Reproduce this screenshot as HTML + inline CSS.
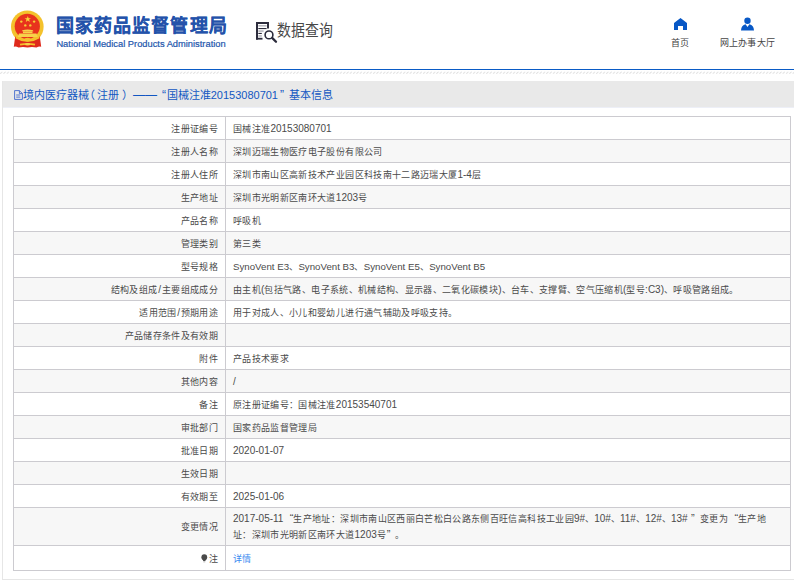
<!DOCTYPE html>
<html lang="zh-CN">
<head>
<meta charset="utf-8">
<style>
*{margin:0;padding:0;box-sizing:border-box}
html,body{width:794px;height:581px;overflow:hidden;background:#fff;font-family:"Liberation Sans",sans-serif;color:#555}
.abs{position:absolute}
#emblem{left:0;top:0;width:56px;height:56px}
#title{left:55.9px;top:13.3px;font-size:18px;font-weight:700;color:#2352aa;-webkit-text-stroke:0.12px #2352aa;white-space:nowrap;line-height:26px;letter-spacing:1.1px}
#sub{left:56.4px;top:39px;font-size:9.32px;color:#2356ac;-webkit-text-stroke:0.2px #2356ac;white-space:nowrap;line-height:11px}
#qicon{left:255px;top:21px;width:23px;height:23px;overflow:visible}
#qtext{left:277px;font-size:14px;color:#484848;white-space:nowrap;line-height:20px;transform:scale(0.99,1.1);transform-origin:0 0;top:18.6px}
#home{left:673px;top:17px;width:15px;height:14px}
#hometext{left:670.5px;top:35.6px;font-size:9px;letter-spacing:0.3px;color:#444;white-space:nowrap;line-height:14px}
#user{left:740px;top:16px;width:15px;height:15px}
#usertext{left:719.5px;top:35.6px;font-size:9px;letter-spacing:0.3px;color:#444;white-space:nowrap;line-height:14px}
#blueline{left:0;top:69px;width:794px;height:1px;background:#0a5bc6}
#hatch{left:0;top:70.5px;width:794px;height:3px}
#panel{left:2px;top:81px;width:800px;height:499px;border-left:1px solid #e6e6e6;border-bottom:1px solid #e6e6e6}
#phead{left:0;top:0;width:800px;height:27px;background:#e9e9e9;border-bottom:1px solid #edeff7}
.pt{top:7.3px;font-size:11px;color:#1257c2;white-space:nowrap;line-height:14px}
table{position:absolute;left:13px;top:116px;width:778px;border-collapse:collapse;font-size:9px;letter-spacing:0.35px;color:#4a4a4a}
.n{font-size:10px;letter-spacing:0}
.qo{display:inline-block;width:10px;text-align:right;letter-spacing:0;font-size:11px}
.qc{display:inline-block;width:12.5px;padding-left:3.5px;text-align:left;letter-spacing:0;font-size:11px}
.h{letter-spacing:-0.07px}
.s{font-size:9.7px}
td{border:1px solid #cccbd0;height:23px;padding:1.5px 0 0 0;vertical-align:middle;line-height:14px}
td.l{width:212px;text-align:right;padding-right:7px}
td.v{padding-left:7px}
tr:nth-child(even) td{background:#f7f7f7}
a{color:#3d8bf0;text-decoration:none}
</style>
</head>
<body>
<svg id="emblem" class="abs" viewBox="0 0 56 56">
  <circle cx="27.3" cy="26.8" r="16.3" fill="#f4c22c"/>
  <circle cx="27.3" cy="26.3" r="12.6" fill="#e8331d"/>
  <path d="M27.8 15.9 L28.6 18.2 L31 18.2 L29.1 19.6 L29.8 21.9 L27.8 20.5 L25.8 21.9 L26.5 19.6 L24.6 18.2 L27 18.2Z" fill="#f8d53a"/>
  <circle cx="21.3" cy="21.6" r="1.2" fill="#f6cd36"/><circle cx="34.1" cy="21.6" r="1.2" fill="#f6cd36"/>
  <circle cx="25.3" cy="25.4" r="1.2" fill="#f6cd36"/><circle cx="30.3" cy="25.4" r="1.2" fill="#f6cd36"/>
  <path d="M22.5 30.2 Q27.5 29 32.8 30.2 L33.5 31.3 H21.8Z" fill="#f7d24a"/>
  <rect x="23" y="31.3" width="9.5" height="1.8" fill="#f7d24a"/>
  <path d="M19 33.6 H36.5 L37.8 37 H17.6Z" fill="#f7d24a"/>
  <path d="M15.2 36.5 Q21 40.5 27.5 40.5 Q34 40.5 39.8 36.5 L41.2 46.8 Q39 46 36.5 47.6 Q32 46.3 27.5 47.6 Q23 46.3 18.5 47.6 Q16 46 13.8 46.8Z" fill="#df2a1c"/>
  <path d="M16 36.6 Q21.5 40.2 27.5 40 Q33.5 40.2 39 36.6 L39.5 38.2 Q33.5 42 27.5 41.8 Q21.5 42 15.5 38.2Z" fill="#f4c22c"/>
  <ellipse cx="27.6" cy="39.6" rx="3.3" ry="1.9" fill="#f4c22c"/>
  <path d="M19.8 43.8 Q27.5 42.3 35.2 43.8 L34.8 45.4 Q27.5 44 20.2 45.4Z" fill="#f4c22c"/>
  <ellipse cx="27.6" cy="44.3" rx="2.6" ry="1.3" fill="#f7d24a"/>
</svg>
<div id="title" class="abs">国家药品监督管理局</div>
<div id="sub" class="abs">National Medical Products Administration</div>

<svg id="qicon" class="abs" viewBox="0 0 23 23">
  <rect x="1" y="1" width="13" height="2" fill="#2c2c3c"/>
  <rect x="1" y="1" width="2" height="17.6" fill="#2c2c3c"/>
  <rect x="12" y="1" width="2" height="6.5" fill="#2c2c3c"/>
  <rect x="1" y="16.8" width="6.5" height="1.8" fill="#2c2c3c"/>
  <rect x="3.3" y="4.3" width="8.3" height="1.1" fill="#9a9aa4"/>
  <rect x="3.3" y="7" width="8.3" height="1.1" fill="#2c2c3c"/>
  <rect x="3.3" y="9.5" width="5.3" height="1.1" fill="#9a9aa4"/>
  <rect x="3.3" y="11.9" width="3.5" height="1.1" fill="#2c2c3c"/>
  <rect x="3.3" y="14.4" width="3.5" height="1.1" fill="#9a9aa4"/>
  <circle cx="14" cy="13.9" r="3.9" fill="none" stroke="#2c2c3c" stroke-width="1.6"/>
  <path d="M17.4 17.1 L21 20.8" stroke="#2c2c3c" stroke-width="2.3" stroke-linecap="round"/>
</svg>
<div id="qtext" class="abs">数据查询</div>

<svg id="home" class="abs" viewBox="0 0 15 14">
  <path d="M7.5 1 L14 6 V13 H10 V9 H5 V13 H1 V6Z" fill="#0858c6"/>
</svg>
<div id="hometext" class="abs">首页</div>
<svg id="user" class="abs" viewBox="0 0 15 15">
  <circle cx="7.5" cy="4.8" r="3.2" fill="#0858c6"/>
  <path d="M1 14.5 Q1.3 9.3 5.6 8.3 L7.5 11 L9.4 8.3 Q13.7 9.3 14 14.5Z" fill="#0858c6"/>
</svg>
<div id="usertext" class="abs">网上办事大厅</div>

<div id="blueline" class="abs"></div>
<svg id="hatch" class="abs" width="794" height="3"><defs><pattern id="hp" width="3.33" height="3" patternUnits="userSpaceOnUse"><path d="M0.3 2.7 L2.3 0.7" stroke="#dcdcdc" stroke-width="0.9"/></pattern></defs><rect width="794" height="3" fill="url(#hp)"/></svg>

<div id="panel" class="abs">
  <div id="phead" class="abs"></div>
  <svg class="abs" style="left:11px;top:8.8px;width:9px;height:10px" viewBox="0 0 9 10"><path d="M0.6 0.6 H5.4 L8.4 3.6 V9.4 H0.6Z M5.4 0.6 V3.6 H8.4" fill="none" stroke="#3f66cc" stroke-width="0.9"/><path d="M2.2 5 H6.3 M2.2 7.1 H6.3" stroke="#3f66cc" stroke-width="0.9"/></svg>
  <div class="abs pt" style="left:19.5px">境内医疗器械</div>
  <div class="abs pt" style="left:80.6px">（</div>
  <div class="abs pt" style="left:93.9px">注册</div>
  <div class="abs pt" style="left:119.3px">）</div>
  <div class="abs pt" style="left:130px;font-size:12px">——</div>
  <div class="abs pt" style="left:159px;font-size:12px">“</div>
  <div class="abs pt" style="left:163.7px">国械注准20153080701</div>
  <div class="abs pt" style="left:277px;font-size:12px">”</div>
  <div class="abs pt" style="left:286px">基本信息</div>
</div>

<table>
<tr><td class="l">注册证编号</td><td class="v">国械注准<span class="n">20153080701</span></td></tr>
<tr><td class="l">注册人名称</td><td class="v">深圳迈瑞生物医疗电子股份有限公司</td></tr>
<tr><td class="l">注册人住所</td><td class="v">深圳市南山区高新技术产业园区科技南十二路迈瑞大厦<span class="n">1-4</span>层</td></tr>
<tr><td class="l">生产地址</td><td class="v">深圳市光明新区南环大道<span class="n">1203</span>号</td></tr>
<tr><td class="l">产品名称</td><td class="v">呼吸机</td></tr>
<tr><td class="l">管理类别</td><td class="v">第三类</td></tr>
<tr><td class="l">型号规格</td><td class="v"><span class="n s">SynoVent E3</span>、<span class="n s">SynoVent B3</span>、<span class="n s">SynoVent E5</span>、<span class="n s">SynoVent B5</span></td></tr>
<tr><td class="l">结构及组成<span class="n" style="padding:0 0.8px">/</span>主要组成成分</td><td class="v">由主机<span class="n">(</span>包括气路、电子系统、机械结构、显示器、二氧化碳模块<span class="n">)</span>、台车、支撑臂、空气压缩机<span class="n">(</span>型号<span class="n">:C3)</span>、呼吸管路组成。</td></tr>
<tr><td class="l">适用范围<span class="n" style="padding:0 0.6px">/</span>预期用途</td><td class="v">用于对成人、小儿和婴幼儿进行通气辅助及呼吸支持。</td></tr>
<tr><td class="l">产品储存条件及有效期</td><td class="v"></td></tr>
<tr><td class="l">附件</td><td class="v">产品技术要求</td></tr>
<tr><td class="l">其他内容</td><td class="v"><span class="n">/</span></td></tr>
<tr><td class="l">备注</td><td class="v">原注册证编号：国械注准<span class="n">20153540701</span></td></tr>
<tr><td class="l">审批部门</td><td class="v">国家药品监督管理局</td></tr>
<tr><td class="l">批准日期</td><td class="v"><span class="n">2020-01-07</span></td></tr>
<tr><td class="l">生效日期</td><td class="v"></td></tr>
<tr><td class="l">有效期至</td><td class="v"><span class="n">2025-01-06</span></td></tr>
<tr><td class="l" style="height:38px">变更情况</td><td class="v" style="line-height:15.3px;padding-top:1px"><span class="n">2017-05-11</span><span class="qo">“</span>生产地址：深圳市南山区西丽白芒松白公路东侧百旺信高科技工业园<span class="n h">9#</span>、<span class="n h">10#</span>、<span class="n h">11#</span>、<span class="n h">12#</span>、<span class="n h">13#</span><span class="qc">”</span>变更为<span class="qo">“</span>生产地<br>址：深圳市光明新区南环大道<span class="n">1203</span>号<span class="qc" style="padding-left:0.5px;width:8.5px">”</span>。</td></tr>
<tr><td class="l" style="height:25px;padding-top:1.5px"><svg width="7" height="9" viewBox="0 0 7 9" style="vertical-align:-1px;margin-right:0.5px"><circle cx="3.3" cy="3.2" r="2.9" fill="#4a4a4a"/><path d="M1.6 5 H5 L4.4 7 H2.2Z" fill="#4a4a4a"/><rect x="2.3" y="7.4" width="2" height="0.9" fill="#aaa"/></svg>注</td><td class="v" style="padding-top:1.5px"><a>详情</a></td></tr>
</table>
</body>
</html>
